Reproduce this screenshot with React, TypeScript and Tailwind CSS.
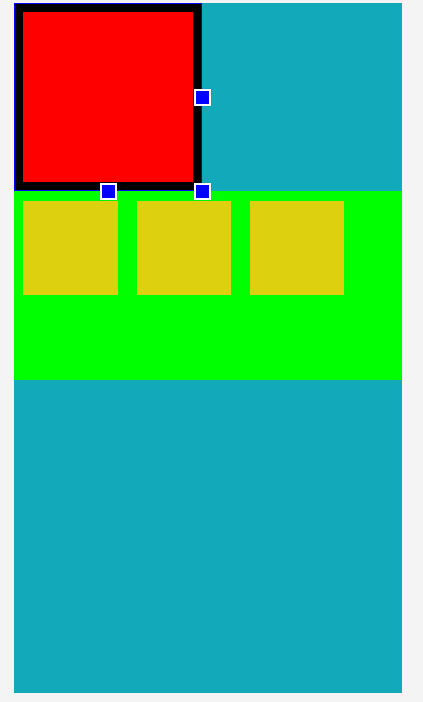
import React from "react";

function Handle({ className }: { className: string }) {
  return (
    <div
      className={`absolute w-[17px] h-[17px] border-2 border-white bg-[#0000ff] shadow-[0_0_1px_rgba(0,0,0,0.3)] ${className}`}
    />
  );
}

export default function App() {
  return (
    <div className="min-h-[702px] w-full bg-[#f4f4f4] pt-[3px] pl-[14px]">
      <div className="relative w-[388px] h-[690px] bg-[#12a9bb] flex flex-col">
        <div className="w-[188px] h-[188px] border border-[#0000ff] shrink-0">
          <div className="w-full h-full border-8 border-black bg-[#ff0000]" />
        </div>
        <div className="h-[189px] bg-[#00ff00] flex items-start pt-[10px] pl-[9.33px] gap-[19px] shrink-0">
          <div className="w-[94.33px] h-[94px] bg-[#ddd00f]" />
          <div className="w-[94.33px] h-[94px] bg-[#ddd00f]" />
          <div className="w-[94.33px] h-[94px] bg-[#ddd00f]" />
        </div>
        <Handle className="left-[179.5px] top-[85.5px]" />
        <Handle className="left-[85.5px] top-[179.5px]" />
        <Handle className="left-[179.5px] top-[179.5px]" />
      </div>
    </div>
  );
}
